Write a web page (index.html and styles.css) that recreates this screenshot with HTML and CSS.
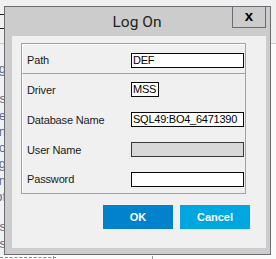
FILE: index.html
```html
<!DOCTYPE html>
<html>
<head>
<meta charset="utf-8">
<link rel="stylesheet" href="styles.css">
</head>
<body>
<div class="page">
  <div class="topbar">
    <div class="topbar-tabs"></div>
  </div>
  <div class="main">
    <div class="sidebar">
      <span class="frag frag-first">listing</span>
      <span class="frag">This</span>
      <span class="frag">are</span>
      <span class="frag">in</span>
      <span class="frag">to</span>
      <span class="frag">ing</span>
      <span class="frag">on</span>
      <span class="frag">of</span>
      <span class="frag frag-gap">ss</span>
      <span class="frag">is</span>
    </div>
    <div class="canvas"></div>
  </div>
  <div class="footer">
    <div class="footer-dash"></div>
    <div class="footer-tick"></div>
    <div class="footer-tick footer-tick-2"></div>
  </div>
</div>

<div class="dialog">
  <div class="titlebar">
    <span class="title">Log On</span>
    <button class="close" type="button">x</button>
  </div>
  <div class="content">
    <div class="group">
      <div class="section section-path">
        <div class="row">
          <span class="label">Path</span>
          <span class="input">DEF</span>
        </div>
      </div>
      <div class="section section-main">
        <div class="row">
          <span class="label">Driver</span>
          <span class="input input-short">MSS</span>
        </div>
        <div class="row">
          <span class="label">Database Name</span>
          <span class="input">SQL49:BO4_6471390</span>
        </div>
        <div class="row">
          <span class="label">User Name</span>
          <span class="input input-disabled"></span>
        </div>
        <div class="row">
          <span class="label">Password</span>
          <span class="input"></span>
        </div>
      </div>
    </div>
    <div class="buttons">
      <button class="btn btn-ok" type="button">OK</button>
      <button class="btn btn-cancel" type="button">Cancel</button>
    </div>
  </div>
</div>
</body>
</html>
```

FILE: styles.css
```css
* { box-sizing: border-box; }

html, body {
  margin: 0;
  padding: 0;
}

body {
  width: 276px;
  height: 259px;
  overflow: hidden;
  font-family: "Liberation Sans", Arial, sans-serif;
  background: #fbfbfb;
  position: relative;
}

/* background page */
.page {
  display: flex;
  flex-direction: column;
  height: 259px;
}

.topbar {
  height: 44px;
  background: #f0f0f0;
  border-bottom: 1px solid #c9c9c9;
  flex: none;
}

.topbar-tabs {
  width: 5px;
  height: 15px;
  margin-top: 14px;
  border-top: 1px solid #1e1e1e;
  border-bottom: 1px solid #1e1e1e;
}

.main {
  flex: 1;
  display: flex;
}

.sidebar {
  width: 6px;
  overflow: hidden;
  background: #f0f1f3;
  display: flex;
  flex-direction: column;
  align-items: flex-end;
  padding-top: 17px;
  font-size: 13px;
  line-height: 16.3px;
  color: #5d6880;
  white-space: nowrap;
}

.frag-first { margin-bottom: 14px; }
.frag-gap { margin-top: 14px; }

.canvas {
  flex: 1;
  background: #fbfbfb;
}

.footer {
  height: 4px;
  flex: none;
  position: relative;
  background: #fbfbfb;
}

.footer-dash {
  width: 56px;
  margin-top: 2px;
  border-top: 1px dashed #8a8a8a;
}

.footer-tick {
  position: absolute;
  left: 53px;
  top: 1px;
  width: 1px;
  height: 3px;
  background: #9a9a9a;
}

.footer-tick-2 { left: 152px; }

/* dialog */
.dialog {
  position: absolute;
  left: 4px;
  top: 6px;
  width: 267px;
  height: 249px;
  border: 1px solid #6c6c72;
  background: #cccccc;
  padding: 0 4px 6px 7px;
  display: flex;
  flex-direction: column;
}

.titlebar {
  height: 29px;
  flex: none;
  display: flex;
  align-items: center;
  justify-content: center;
  padding-right: 4px;
}

.title {
  font-family: Roboto, "Liberation Sans", sans-serif;
  font-size: 15.5px;
  color: #1f1f1f;
  margin-top: 1px;
}

.close {
  position: absolute;
  top: -1px;
  right: 4px;
  width: 34px;
  height: 22px;
  border: 1px solid #6c6c72;
  background: #cccccc;
  padding: 0;
  margin: 0;
  font-family: "Liberation Sans", Arial, sans-serif;
  font-weight: bold;
  font-size: 15px;
  line-height: 16px;
  color: #000;
  padding-bottom: 3px;
}

.content {
  flex: 1;
  background: #f0f0f0;
  padding: 7px 0 0 9px;
  display: flex;
  flex-direction: column;
}

.group {
  width: 225px;
  border: 1px solid #a2a2a2;
  box-shadow: inset 1px 1px 0 #ffffff;
}

.section-path {
  height: 30px;
  border-bottom: 1px solid #a2a2a2;
  display: flex;
  padding-top: 2px;
}

.section-path .row { flex: 1; }

.section-main {
  display: grid;
  grid-template-rows: 30px 30px 30px 29px;
}

.row {
  display: grid;
  grid-template-columns: 104px auto;
  align-items: center;
  padding-left: 5px;
  padding-top: 1px;
}

.label {
  font-size: 11px;
  color: #1a1a1a;
  letter-spacing: -0.15px;
}

.input {
  display: block;
  width: 113px;
  height: 15px;
  border: 1px solid #0a0a0a;
  background: #ffffff;
  font-size: 11px;
  line-height: 13px;
  padding: 0 1px;
  color: #000;
  white-space: nowrap;
  overflow: hidden;
  letter-spacing: -0.25px;
}

.input-short { width: 28px; }

.input-disabled {
  background: #d8d8d8;
  border-color: #3a3a3a;
}

.buttons {
  display: flex;
  justify-content: flex-end;
  gap: 7px;
  margin-top: 11px;
  padding-right: 16px;
}

.btn {
  width: 70px;
  height: 24px;
  border: none;
  margin: 0;
  padding: 0;
  color: #ffffff;
  font-family: "Liberation Sans", Arial, sans-serif;
  font-weight: bold;
  font-size: 11px;
}

.btn-ok { background: #0182cb; }
.btn-cancel { background: #00a6df; }
```
